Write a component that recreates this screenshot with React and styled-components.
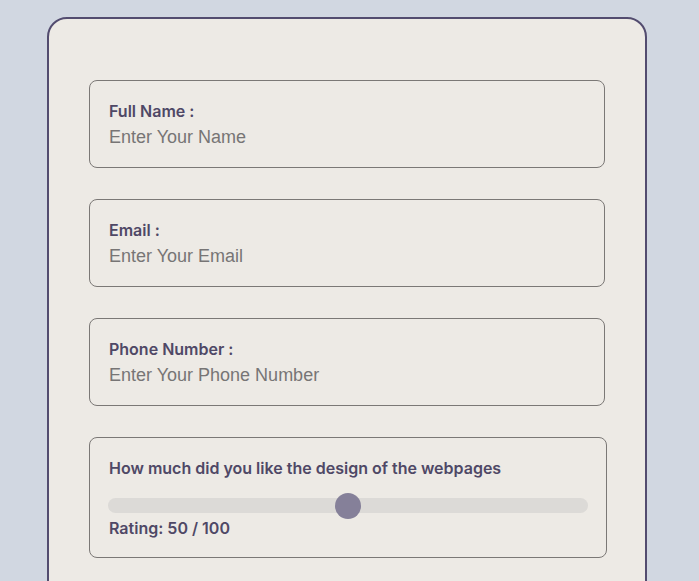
import React, { useState } from 'react'
import styled, { createGlobalStyle } from 'styled-components'

const GlobalStyle = createGlobalStyle`
  html, body {
    margin: 0;
    padding: 0;
    background: #d1d7e1;
    font-family: Inter, "Liberation Sans", sans-serif;
  }
`

const Page = styled.div`
  padding: 17px 52px 0 47px;
  height: 581px;
  box-sizing: border-box;
  overflow: hidden;
`

const Card = styled.form`
  width: 600px;
  box-sizing: border-box;
  background: #edeae5;
  border: 2px solid #534c6f;
  border-radius: 20px;
  padding: 61px 40px 60px;
  display: flex;
  flex-direction: column;
  gap: 31px;
`

const Field = styled.div`
  box-sizing: border-box;
  width: ${p => (p.wide ? '518px' : '516px')};
  border: 1px solid #7b7876;
  border-radius: 8px;
  padding: 20px 19px 19px;
  display: flex;
  flex-direction: column;
`

const Label = styled.label`
  font-size: 16px;
  font-weight: 600;
  color: #4f4866;
  line-height: 20px;
`

const Input = styled.input`
  border: none;
  outline: none;
  background: transparent;
  padding: 0;
  margin-top: 6px;
  font-family: "Liberation Sans", Arial, sans-serif;
  font-size: 18px;
  line-height: 21px;
  color: #333;

  &::placeholder {
    color: #777575;
  }
`

const Slider = styled.input`
  appearance: none;
  -webkit-appearance: none;
  width: 480px;
  height: 15px;
  margin: 20px 0 5px -1px;
  background: #dcdad7;
  border-radius: 8px;
  outline: none;

  &::-webkit-slider-thumb {
    -webkit-appearance: none;
    width: 26px;
    height: 26px;
    border-radius: 50%;
    background: #858099;
    cursor: pointer;
  }
`

const Rating = styled.div`
  font-size: 16px;
  font-weight: 600;
  color: #4f4866;
  line-height: 20px;
`

const App = () => {
  const [rating, setRating] = useState(50)

  return (
    <Page>
      <GlobalStyle />
      <Card>
        <Field>
          <Label htmlFor="name">Full Name :</Label>
          <Input id="name" placeholder="Enter Your Name" />
        </Field>
        <Field>
          <Label htmlFor="email">Email :</Label>
          <Input id="email" placeholder="Enter Your Email" />
        </Field>
        <Field>
          <Label htmlFor="phone">Phone Number :</Label>
          <Input id="phone" placeholder="Enter Your Phone Number" />
        </Field>
        <Field wide>
          <Label htmlFor="rating">How much did you like the design of the webpages</Label>
          <Slider
            id="rating"
            type="range"
            min="0"
            max="100"
            value={rating}
            onChange={e => setRating(e.target.value)}
          />
          <Rating>Rating: {rating} / 100</Rating>
        </Field>
      </Card>
    </Page>
  )
}

export default App
